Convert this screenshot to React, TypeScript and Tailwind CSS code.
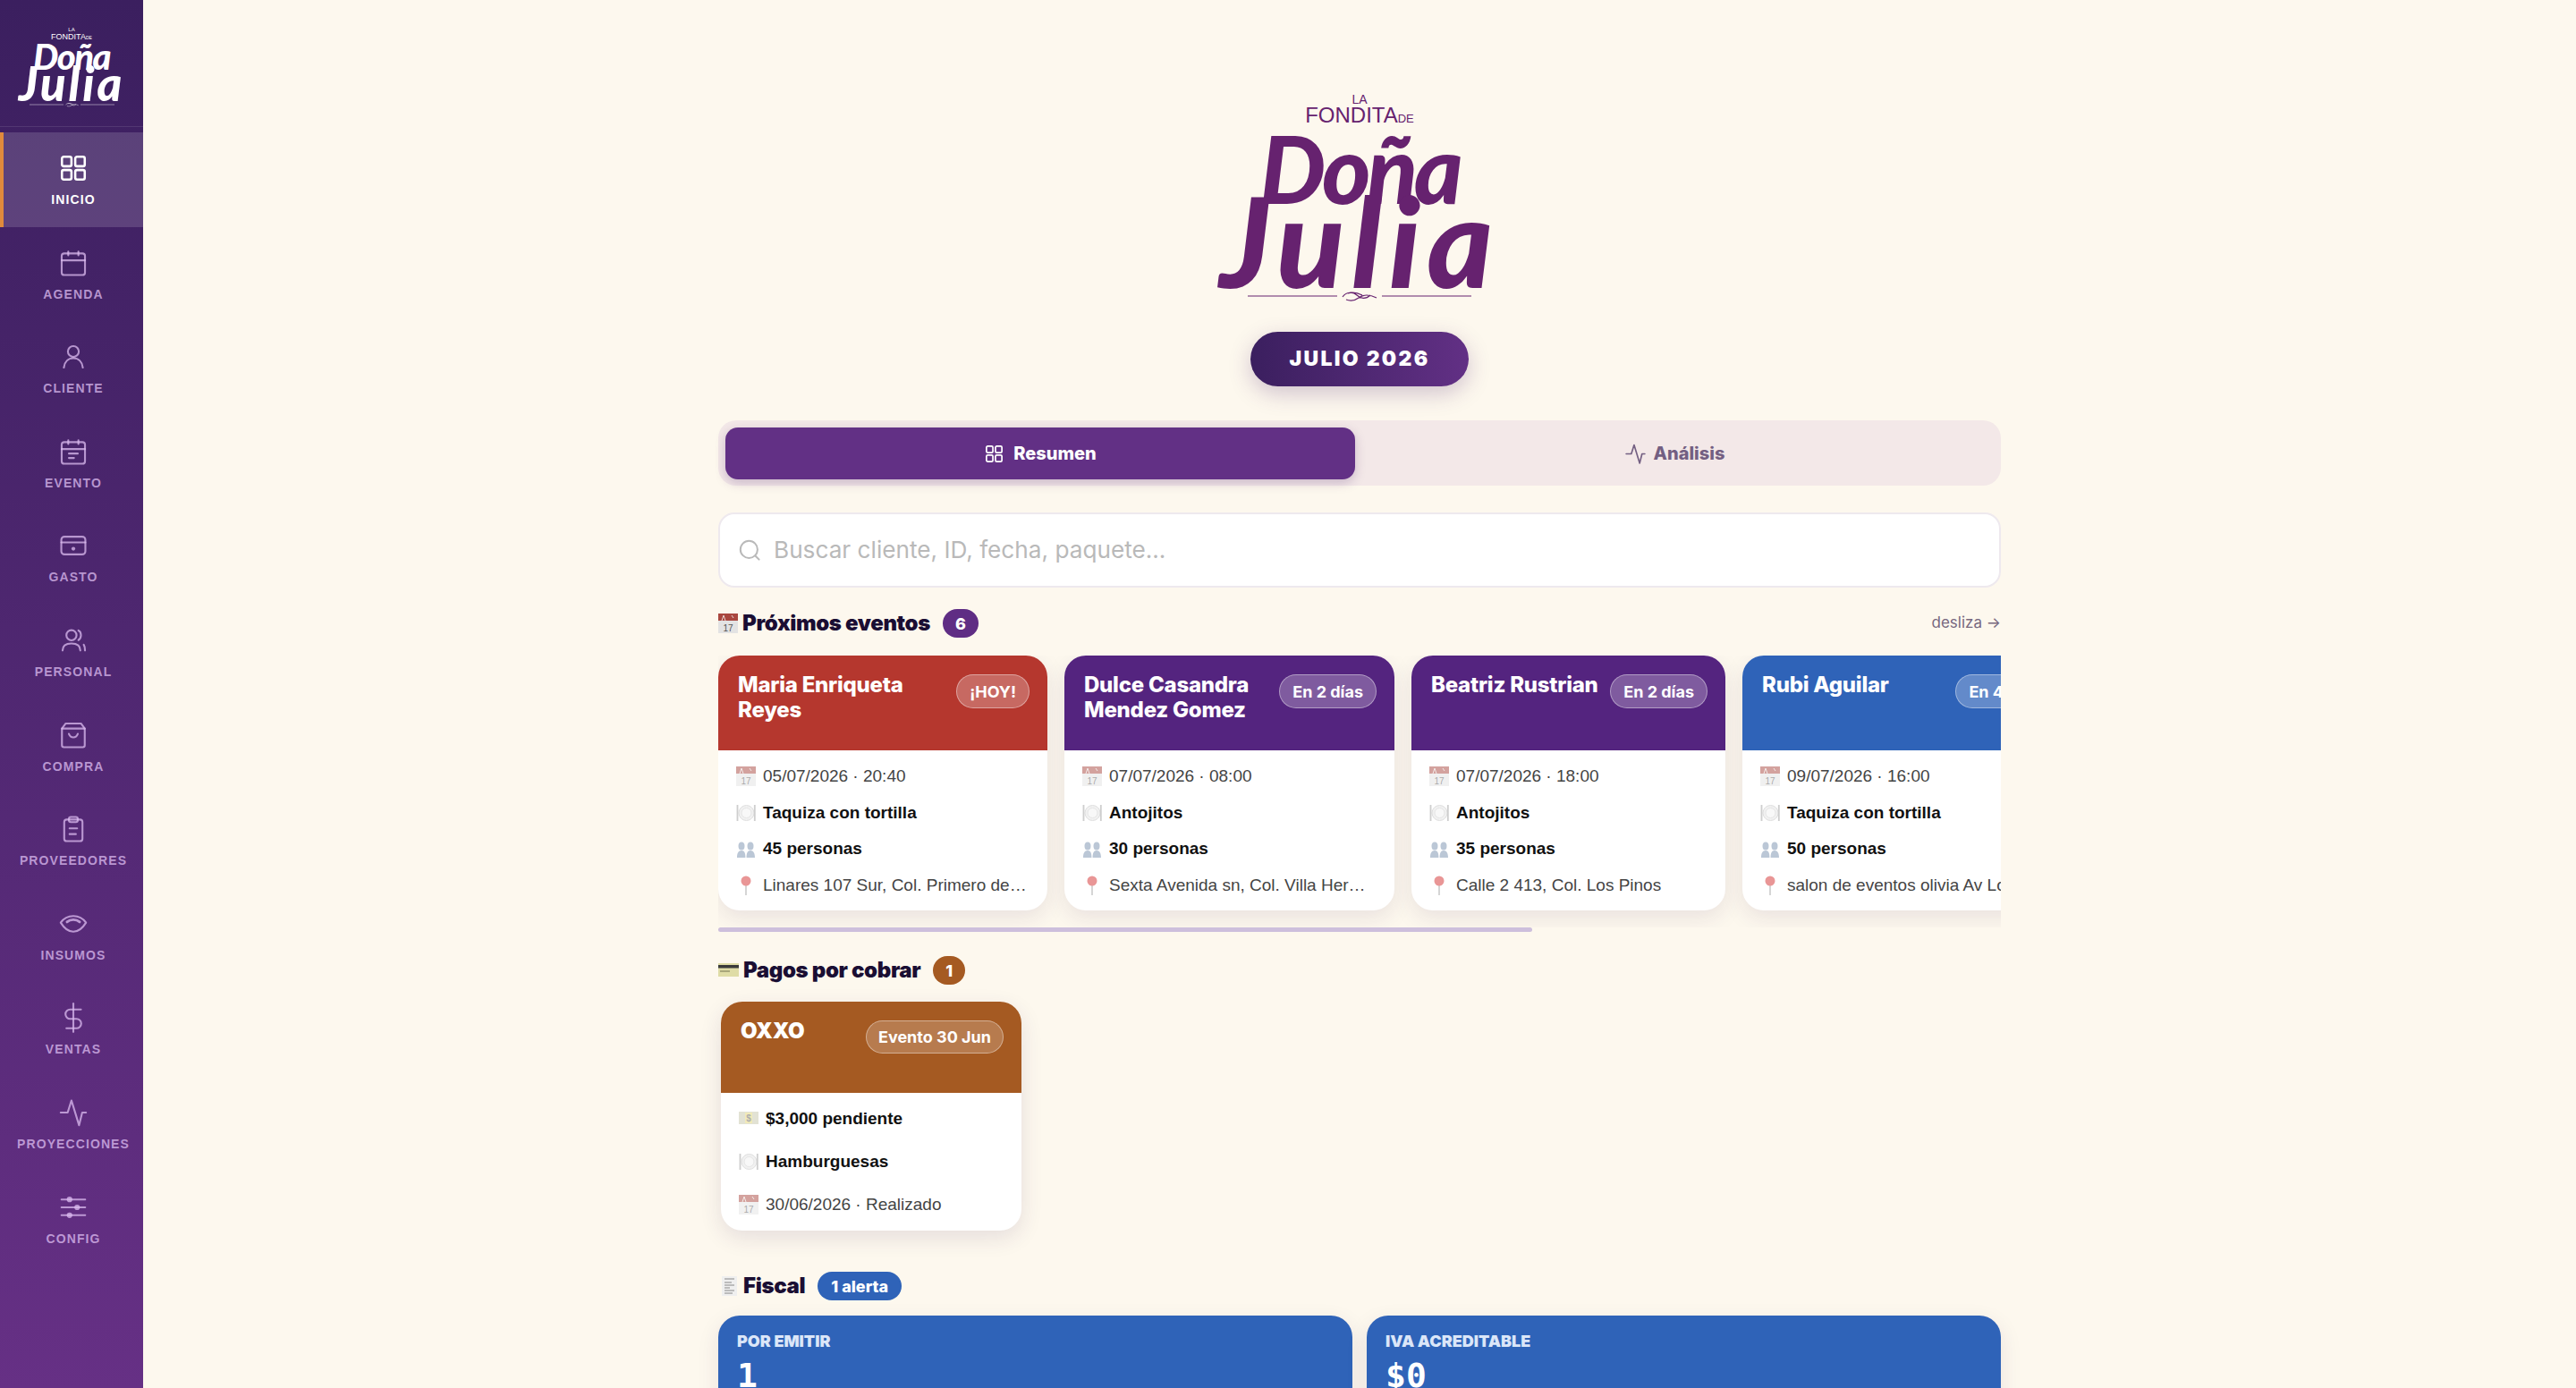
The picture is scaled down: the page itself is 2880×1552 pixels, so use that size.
import type { ReactNode } from "react";

const HEAD = "font-['Inter','Noto_Sans',sans-serif]";
const BODY = "font-['Liberation_Sans',Arial,sans-serif]";

const Ico = ({ children, className = "w-[34px] h-[34px]", sw = 1.5 }: { children: ReactNode; className?: string; sw?: number }) => (
  <svg viewBox="0 0 24 24" fill="none" stroke="currentColor" strokeWidth={sw} strokeLinecap="round" strokeLinejoin="round" className={className}>
    {children}
  </svg>
);

const GridGlyph = (
  <>
    <rect x="3" y="3" width="7.5" height="7.5" rx="1.4" />
    <rect x="13.5" y="3" width="7.5" height="7.5" rx="1.4" />
    <rect x="3" y="13.5" width="7.5" height="7.5" rx="1.4" />
    <rect x="13.5" y="13.5" width="7.5" height="7.5" rx="1.4" />
  </>
);

const ActivityGlyph = <path d="M2 12h5.5l3-9.5 6 19.5 2.5-10H22" />;

const NAV: { label: string; icon: ReactNode }[] = [
  { label: "INICIO", icon: GridGlyph },
  {
    label: "AGENDA",
    icon: (
      <>
        <rect x="2.8" y="4.5" width="18.4" height="17" rx="2" />
        <path d="M2.8 10h18.4M8 3v3M16 3v3" />
      </>
    ),
  },
  {
    label: "CLIENTE",
    icon: (
      <>
        <circle cx="12" cy="7.8" r="4.3" />
        <path d="M4.5 20.5c.6-4.8 3.6-7.4 7.5-7.4s6.900 2.600 7.5 7.400" />
      </>
    ),
  },
  {
    label: "EVENTO",
    icon: (
      <>
        <rect x="2.8" y="4.5" width="18.4" height="17" rx="2" />
        <path d="M2.8 10h18.4M8 3v3M16 3v3M8.5 13.5h7M8.5 17h4" />
      </>
    ),
  },
  {
    label: "GASTO",
    icon: (
      <>
        <rect x="2.5" y="5" width="19" height="14" rx="2.5" />
        <path d="M2.5 9.5h19" />
        <circle cx="12" cy="14.5" r="1.5" fill="currentColor" stroke="none" />
      </>
    ),
  },
  {
    label: "PERSONAL",
    icon: (
      <>
        <circle cx="10.5" cy="8" r="4" />
        <path d="M3.5 20c0-3.5 2.5-5.5 7-5.5s7 2 7 5.5M16 4.2c1.4.6 2 2.2 2 3.8s-.6 3-2 3.8M20.2 15.5c.7 1 1 2.8 1 4.5" />
      </>
    ),
  },
  {
    label: "COMPRA",
    icon: (
      <>
        <path d="M6 2.800h12l3 4v13.200a1.500 1.500 0 0 1-1.500 1.500h-15A1.500 1.500 0 0 1 3 20V6.800z" />
        <path d="M3 6.800h18M8.500 11c.8 2 2 2.800 3.500 2.800s2.700-.8 3.500-2.800" />
      </>
    ),
  },
  {
    label: "PROVEEDORES",
    icon: (
      <>
        <rect x="4.8" y="4.5" width="14.4" height="17" rx="2" />
        <rect x="8.5" y="2.5" width="7" height="4" rx="1.5" />
        <path d="M9 11.5h6M9 16h5" />
      </>
    ),
  },
  {
    label: "INSUMOS",
    icon: (
      <>
        <path d="M2 11c2.500-3.500 6-5.200 10-5.200s7.500 1.700 10 5.200c-2.500 4-6 7.200-10 7.200S4.500 15 2 11z" />
        <path d="M7 10.500c1.500-1.300 3.300-1.800 5-1.800s3.500.5 5 1.800" strokeWidth="2" />
      </>
    ),
  },
  {
    label: "VENTAS",
    icon: (
      <>
        <path d="M12 .8v22.400" />
        <path d="M18 5.500H9.500a3.700 3.700 0 0 0 0 7.400h5a3.700 3.700 0 0 1 0 7.400H6.500" />
      </>
    ),
  },
  { label: "PROYECCIONES", icon: ActivityGlyph },
  {
    label: "CONFIG",
    icon: (
      <>
        <path d="M2.600 5.800h18.800M2.600 12h18.800M2.600 18.200h18.800" strokeWidth="1.4" />
        <circle cx="9" cy="5.800" r="2.200" fill="currentColor" stroke="none" />
        <circle cx="15" cy="12" r="2.200" fill="currentColor" stroke="none" />
        <circle cx="9" cy="18.200" r="2.200" fill="currentColor" stroke="none" />
      </>
    ),
  },
];

const Swirl = ({ className }: { className: string }) => (
  <svg viewBox="0 0 250 14" className={className} fill="none" stroke="currentColor" strokeWidth="1.2">
    <path d="M0 7h100M150 7h100" />
    <path d="M106 8c4-6 12-6 16-2s10 5 15 0M110 11c5 2 10 1 14-2s10-5 20 0M112 4c6-2 12 0 16 2" />
  </svg>
);

/* wordmark, real text in a heavy italic since no script face is installed */
const BigLogo = () => (
  <div className="flex flex-col items-center text-[#66226f] font-['Lato',sans-serif]">
    <div className="pt-[3px] text-[14px] leading-[16px] font-['Liberation_Sans',sans-serif]">LA</div>
    <div className="flex items-baseline text-[24px] leading-[20px] font-['Liberation_Sans',sans-serif]">
      FONDITA<span className="text-[13px]">DE</span>
    </div>
    <div className="-mt-[3px] text-[104px] leading-[96px] font-black italic tracking-[-0.04em]">Doña</div>
    <div className="-mt-[18px] text-[140px] leading-[100px] font-black italic tracking-[0.054em]">Julia</div>
    <Swirl className="mt-[6px] w-[250px] h-[14px]" />
  </div>
);

const SmallLogo = () => (
  <div className="flex flex-col items-center text-white font-['Lato',sans-serif]">
    <div className="text-[6px] leading-[7px] font-['Liberation_Sans',sans-serif]">LA</div>
    <div className="flex items-baseline text-[9px] leading-[8px] font-['Liberation_Sans',sans-serif]">
      FONDITA<span className="text-[5px]">DE</span>
    </div>
    <div className="-mt-[1px] text-[40px] leading-[36px] font-black italic tracking-[-0.04em]">Doña</div>
    <div className="-mt-[7px] text-[53px] leading-[38px] font-black italic tracking-[0.054em]">Julia</div>
    <Swirl className="mt-[2px] w-[95px] h-[6px]" />
  </div>
);

const Sidebar = () => (
  <aside className="w-[160px] h-full shrink-0 bg-gradient-to-b from-[#3b1f5f] to-[#663085] flex flex-col">
    <div className="h-[142px] shrink-0 border-b border-white/10 flex items-center justify-center pt-[8px]">
      <SmallLogo />
    </div>
    <nav className="pt-[6px] flex flex-col">
      {NAV.map((n, i) => (
        <div
          key={n.label}
          className={`h-[105.6px] pt-[23px] flex flex-col items-center border-l-4 ${BODY} ${
            i === 0 ? "border-[#e08a3c] bg-white/15 text-white" : "border-transparent text-[#dcbcf0]/75"
          }`}
        >
          <Ico sw={i === 0 ? 1.8 : 1.5}>{n.icon}</Ico>
          <span className="mt-[10px] text-[14px] leading-[16px] font-bold tracking-[1.1px]">{n.label}</span>
        </div>
      ))}
    </nav>
  </aside>
);

const CalEmoji = ({ className = "", faded }: { className?: string; faded?: boolean }) => (
  <svg viewBox="0 0 22 24" className={`w-[22px] h-[24px] shrink-0 ${faded ? "opacity-50" : ""} ${className}`}>
    <rect x="0" y="1" width="22" height="22" fill="#e3e3e3" />
    <rect x="0" y="1" width="22" height="8" fill="#a9473f" />
    <path d="M4 9l2-6 2 6M15 3l2 3" stroke="#e8d5d0" strokeWidth="1" fill="none" />
    <text x="11" y="20.5" textAnchor="middle" fontSize="10" fill="#555" fontFamily="Liberation Sans">17</text>
  </svg>
);

const PlateEmoji = () => (
  <svg viewBox="0 0 22 24" className="w-[22px] h-[24px] shrink-0 opacity-80">
    <circle cx="11.5" cy="12" r="8.5" fill="#eeeeee" stroke="#d8d8d8" />
    <circle cx="11.5" cy="12" r="5.5" fill="#f7f7f7" stroke="#e0e0e0" />
    <path d="M1.500 3v18M20.800 3v18" stroke="#c2c2c2" strokeWidth="1.8" />
  </svg>
);

const PeopleEmoji = () => (
  <svg viewBox="0 0 22 24" className="w-[22px] h-[24px] shrink-0 opacity-70">
    <g fill="#9fb0c6">
      <ellipse cx="6" cy="9" rx="3.5" ry="4.5" />
      <ellipse cx="16" cy="9" rx="3.5" ry="4.5" />
      <path d="M1 22c0-5 1.500-8 5-8s4.400 3 4.400 8zM11.600 22c0-5 1-8 4.400-8s5 3 5 8z" />
    </g>
  </svg>
);

const PinEmoji = () => (
  <svg viewBox="0 0 22 24" className="w-[22px] h-[24px] shrink-0 opacity-70">
    <path d="M11 11v12" stroke="#bdbdbd" strokeWidth="1.8" />
    <circle cx="11" cy="7" r="5.5" fill="#e06a6a" />
  </svg>
);

const CashEmoji = () => (
  <svg viewBox="0 0 22 24" className="w-[22px] h-[24px] shrink-0 opacity-60">
    <rect x="0" y="4" width="22" height="14" fill="#cfcfb8" />
    <rect x="7" y="5" width="8" height="12" fill="#e8dd8c" />
    <text x="11" y="15" textAnchor="middle" fontSize="10" fill="#777" fontFamily="Liberation Sans">$</text>
  </svg>
);

const CardEmoji = () => (
  <svg viewBox="0 0 23 24" className="w-[23px] h-[24px] shrink-0">
    <rect x="0" y="4" width="23" height="15" fill="#dfdca6" />
    <rect x="0" y="6" width="23" height="3.5" fill="#3a3a3a" />
    <rect x="2" y="12" width="11" height="2" fill="#a9a77a" />
  </svg>
);

const ReceiptEmoji = () => (
  <svg viewBox="0 0 20 24" className="w-[20px] h-[24px] shrink-0 ml-[3px]">
    <rect x="1" y="1" width="17" height="22" fill="#efefef" />
    <path d="M4 4h11M4 8h8M4 11h11M4 14h6M4 17h11M4 20h9" stroke="#888" strokeWidth="1" />
  </svg>
);

const Row = ({ icon, children, bold, h }: { icon: ReactNode; children: ReactNode; bold?: boolean; h: string }) => (
  <div className={`flex items-center gap-[8px] ${h} ${BODY} text-[19px] whitespace-nowrap ${bold ? "font-bold text-[#111111]" : "text-[#444444]"}`}>
    {icon}
    <span>{children}</span>
  </div>
);

type Ev = { name: string[]; badge: string; bg: string; w: string; date: string; pack: string; people: string; addr: string };

const EVENTS: Ev[] = [
  { name: ["Maria Enriqueta", "Reyes"], badge: "¡HOY!", bg: "bg-[#b5372e]", w: "w-[368px]", date: "05/07/2026 · 20:40", pack: "Taquiza con tortilla", people: "45 personas", addr: "Linares 107 Sur, Col. Primero de…" },
  { name: ["Dulce Casandra", "Mendez Gomez"], badge: "En 2 días", bg: "bg-[#54247f]", w: "w-[369px]", date: "07/07/2026 · 08:00", pack: "Antojitos", people: "30 personas", addr: "Sexta Avenida sn, Col. Villa Her…" },
  { name: ["Beatriz Rustrian"], badge: "En 2 días", bg: "bg-[#54247f]", w: "w-[351px]", date: "07/07/2026 · 18:00", pack: "Antojitos", people: "35 personas", addr: "Calle 2 413, Col. Los Pinos" },
  { name: ["Rubi Aguilar"], badge: "En 4 días", bg: "bg-[#2f63b8]", w: "w-[368px]", date: "09/07/2026 · 16:00", pack: "Taquiza con tortilla", people: "50 personas", addr: "salon de eventos olivia Av Lo…" },
];

const EventCard = ({ e }: { e: Ev }) => (
  <div className={`${e.w} h-[285px] shrink-0 rounded-[24px] overflow-hidden bg-white shadow-[0_8px_24px_rgba(60,30,90,0.1)]`}>
    <div className={`h-[106px] ${e.bg} pl-[22px] pr-[20px] flex justify-between items-start`}>
      <div className={`pt-[19px] text-[24px] leading-[28px] font-extrabold tracking-[-0.01em] text-white whitespace-nowrap ${HEAD}`}>
        {e.name.map((l) => (
          <div key={l}>{l}</div>
        ))}
      </div>
      <span className={`mt-[21px] h-[38px] px-[14px] flex items-center rounded-full bg-white/25 border border-white/40 text-white text-[18px] font-bold whitespace-nowrap shrink-0 ${HEAD}`}>
        {e.badge}
      </span>
    </div>
    <div className="pl-[20px] pt-[9px]">
      <Row h="h-[40.5px]" icon={<CalEmoji faded />}>{e.date}</Row>
      <Row h="h-[40.5px]" bold icon={<PlateEmoji />}>{e.pack}</Row>
      <Row h="h-[40.5px]" bold icon={<PeopleEmoji />}>{e.people}</Row>
      <Row h="h-[40.5px]" icon={<PinEmoji />}>{e.addr}</Row>
    </div>
  </div>
);

const SectionHead = ({ icon, title, badge, badgeBg, badgeW }: { icon: ReactNode; title: string; badge: string; badgeBg: string; badgeW: string }) => (
  <div className="h-[32px] flex items-center">
    {icon}
    <h2 className={`ml-[5px] text-[24px] font-black tracking-[-0.015em] text-[#1a0e33] whitespace-nowrap ${HEAD}`}>{title}</h2>
    <span className={`ml-[14px] h-[32px] ${badgeW} flex items-center justify-center rounded-full ${badgeBg} text-white text-[18px] font-extrabold whitespace-nowrap ${HEAD}`}>
      {badge}
    </span>
  </div>
);

const FiscalCard = ({ label, value }: { label: string; value: string }) => (
  <div className="flex-1 h-[200px] rounded-[24px] bg-[#2f63b8] px-[21px] pt-[19px] shadow-[0_8px_24px_rgba(60,30,90,0.1)]">
    <div className={`text-[18px] leading-[20px] font-black text-[#dbe6f8] ${HEAD}`}>{label}</div>
    <div className="mt-[6px] text-[38px] leading-[44px] font-bold text-white font-['DejaVu_Sans_Mono',monospace]">{value}</div>
  </div>
);

export default function App() {
  return (
    <div className="flex h-[1552px] w-[2880px] overflow-hidden bg-[#fdf8ee]">
      <Sidebar />
      <main className="flex-1 flex flex-col items-center overflow-hidden pt-[100px]">
        <div className="w-[1434px] flex flex-col">
          <div className="h-[271px] flex justify-center">
            <BigLogo />
          </div>

          <div className="h-[61px] flex justify-center">
            <div className={`w-[244px] h-[61px] rounded-full bg-gradient-to-r from-[#3b1f5f] to-[#623085] shadow-[0_8px_24px_rgba(80,40,110,0.25)] flex items-center justify-center text-white text-[23px] font-black tracking-[0.1em] ${HEAD}`}>
              JULIO 2026
            </div>
          </div>

          {/* tabs */}
          <div className="mt-[38px] h-[73px] rounded-[20px] bg-[#f3e8e8] p-[8px] pb-[7px] flex">
            <div className={`w-[704px] rounded-[14px] bg-[#623085] shadow-[0_4px_12px_rgba(80,40,110,0.25)] flex items-center justify-center gap-[10px] text-white text-[20px] font-extrabold ${HEAD}`}>
              <Ico className="w-[23px] h-[23px]" sw={1.8}>{GridGlyph}</Ico>
              Resumen
            </div>
            <div className={`flex-1 flex items-center justify-center gap-[8px] text-[#735f82] text-[20px] font-extrabold ${HEAD}`}>
              <Ico className="w-[25px] h-[25px]" sw={1.6}>{ActivityGlyph}</Ico>
              Análisis
            </div>
          </div>

          {/* search */}
          <div className="mt-[30px] h-[84px] rounded-[18px] bg-white border-2 border-[#eee9ee] flex items-center pl-[20px] gap-[13px]">
            <svg viewBox="0 0 24 24" fill="none" stroke="#b9b9b9" strokeWidth="1.8" strokeLinecap="round" className="w-[27px] h-[27px]">
              <circle cx="11" cy="11" r="8.5" />
              <path d="M17.5 17.5L21 21" />
            </svg>
            <span className={`text-[26.2px] text-[#b9b9b9] ${HEAD}`}>Buscar cliente, ID, fecha, paquete...</span>
          </div>

          {/* proximos eventos */}
          <div className="mt-[24px] flex items-center justify-between">
            <SectionHead icon={<CalEmoji />} title="Próximos eventos" badge="6" badgeBg="bg-[#5f2d84]" badgeW="w-[40px]" />
            <span className={`text-[17px] text-[#77687f] ${HEAD}`}>desliza →</span>
          </div>
          <div className="mt-[20px] flex gap-[19px] overflow-hidden pb-[19px]">
            {EVENTS.map((e) => (
              <EventCard key={e.date} e={e} />
            ))}
          </div>
          <div className="h-[5px] w-[910px] rounded-full bg-[#cdbfdc]" />

          {/* pagos */}
          <div className="mt-[27px]">
            <SectionHead icon={<CardEmoji />} title="Pagos por cobrar" badge="1" badgeBg="bg-[#a55a22]" badgeW="w-[36px]" />
          </div>
          <div className="mt-[19px] ml-[3px] w-[336px] h-[256px] rounded-[24px] overflow-hidden bg-white shadow-[0_8px_24px_rgba(60,30,90,0.12)]">
            <div className="h-[102px] bg-[#a55a22] pl-[22px] pr-[20px] flex justify-between items-start">
              <div className={`pt-[19px] text-[24px] leading-[28px] font-black text-white ${HEAD}`}>OXXO</div>
              <span className={`mt-[21px] h-[37px] px-[13px] flex items-center rounded-full bg-white/20 border border-white/40 text-white text-[18px] font-bold whitespace-nowrap ${HEAD}`}>
                Evento 30 Jun
              </span>
            </div>
            <div className="pl-[20px] pt-[5px]">
              <Row h="h-[48px]" bold icon={<CashEmoji />}>$3,000 pendiente</Row>
              <Row h="h-[48px]" bold icon={<PlateEmoji />}>Hamburguesas</Row>
              <Row h="h-[48px]" icon={<CalEmoji faded />}>30/06/2026 · Realizado</Row>
            </div>
          </div>

          {/* fiscal */}
          <div className="mt-[46px]">
            <SectionHead icon={<ReceiptEmoji />} title="Fiscal" badge="1 alerta" badgeBg="bg-[#2f63b8]" badgeW="w-[94px]" />
          </div>
          <div className="mt-[17px] flex gap-[16px]">
            <FiscalCard label="POR EMITIR" value="1" />
            <FiscalCard label="IVA ACREDITABLE" value="$0" />
          </div>
        </div>
      </main>
    </div>
  );
}
